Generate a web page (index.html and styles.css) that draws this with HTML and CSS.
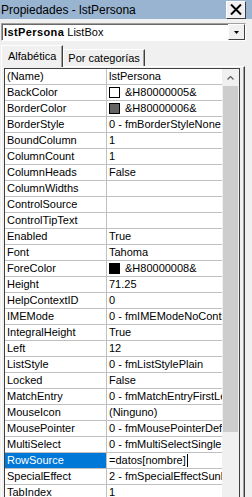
FILE: index.html
```html
<!DOCTYPE html>
<html>

<head>
    <title>Propiedades - lstPersona</title>
    <link rel="stylesheet" href="styles.css">
</head>

<body>
    <div class="titlebar">
        <span class="title">Propiedades - lstPersona</span>
        <span class="close">
            <svg width="12" height="11" viewBox="0 0 12 11"><path d="M1 0.5 L11 10.5 M11 0.5 L1 10.5" stroke="#000" stroke-width="2"/></svg>
        </span>
    </div>

    <div class="objsel">
        <span class="objname"><b>lstPersona</b> ListBox</span>
        <span class="dropbtn">
            <svg width="5" height="3" viewBox="0 0 5 3"><path d="M0 0 H5 L2.5 3 Z" fill="#000"/></svg>
        </span>
    </div>

    <div class="tabs">
        <div class="tab active">Alfabética</div>
        <div class="tab">Por categorías</div>
    </div>

    <div class="page">
        <div class="grid">
            <div class="rows">
                <div class="row"><div class="name">(Name)</div><div class="value">lstPersona</div></div>
                <div class="row"><div class="name">BackColor</div><div class="value"><span class="swatch white"></span>&amp;H80000005&amp;</div></div>
                <div class="row"><div class="name">BorderColor</div><div class="value"><span class="swatch grey"></span>&amp;H80000006&amp;</div></div>
                <div class="row"><div class="name">BorderStyle</div><div class="value">0 - fmBorderStyleNone</div></div>
                <div class="row"><div class="name">BoundColumn</div><div class="value">1</div></div>
                <div class="row"><div class="name">ColumnCount</div><div class="value">1</div></div>
                <div class="row"><div class="name">ColumnHeads</div><div class="value">False</div></div>
                <div class="row"><div class="name">ColumnWidths</div><div class="value"></div></div>
                <div class="row"><div class="name">ControlSource</div><div class="value"></div></div>
                <div class="row"><div class="name">ControlTipText</div><div class="value"></div></div>
                <div class="row"><div class="name">Enabled</div><div class="value">True</div></div>
                <div class="row"><div class="name">Font</div><div class="value">Tahoma</div></div>
                <div class="row"><div class="name">ForeColor</div><div class="value"><span class="swatch black"></span>&amp;H80000008&amp;</div></div>
                <div class="row"><div class="name">Height</div><div class="value">71.25</div></div>
                <div class="row"><div class="name">HelpContextID</div><div class="value">0</div></div>
                <div class="row"><div class="name">IMEMode</div><div class="value">0 - fmIMEModeNoControl</div></div>
                <div class="row"><div class="name">IntegralHeight</div><div class="value">True</div></div>
                <div class="row"><div class="name">Left</div><div class="value">12</div></div>
                <div class="row"><div class="name">ListStyle</div><div class="value">0 - fmListStylePlain</div></div>
                <div class="row"><div class="name">Locked</div><div class="value">False</div></div>
                <div class="row"><div class="name">MatchEntry</div><div class="value">0 - fmMatchEntryFirstLetter</div></div>
                <div class="row"><div class="name">MouseIcon</div><div class="value">(Ninguno)</div></div>
                <div class="row"><div class="name">MousePointer</div><div class="value">0 - fmMousePointerDefault</div></div>
                <div class="row"><div class="name">MultiSelect</div><div class="value">0 - fmMultiSelectSingle</div></div>
                <div class="row sel"><div class="name">RowSource</div><div class="value">=datos[nombre]<span class="caret"></span></div></div>
                <div class="row"><div class="name">SpecialEffect</div><div class="value">2 - fmSpecialEffectSunken</div></div>
                <div class="row"><div class="name">TabIndex</div><div class="value">1</div></div>
            </div>
            <div class="scrollbar">
                <div class="arrow">
                    <svg width="7" height="4" viewBox="0 0 7 4"><path d="M0.5 3.5 L3.5 0.5 L6.5 3.5" stroke="#606060" stroke-width="1.3" fill="none"/></svg>
                </div>
                <div class="thumb"></div>
            </div>
        </div>
    </div>
</body>
</html>
```

FILE: styles.css
```css
body {
    margin: 0;
    width: 252px;
    height: 497px;
    overflow: hidden;
    background: #f0f0f0;
    font-family: "Liberation Sans", Arial, sans-serif;
    font-size: 11px;
    color: #000;
}

.titlebar {
    height: 19px;
    background: #99b4d1;
    display: flex;
    align-items: center;
    padding: 0 6px 0 1px;
}

.title {
    flex: 1;
    font-size: 12px;
}

.close {
    width: 20px;
    height: 18px;
    box-sizing: border-box;
    border: 1px solid;
    border-color: #fff #404040 #404040 #fff;
    background: #f0f0f0;
    display: flex;
    align-items: center;
    justify-content: center;
}

.objsel {
    margin: 4px 6px 0 1px;
    height: 18px;
    box-sizing: border-box;
    border: 1px solid;
    border-color: #a0a0a0 #fff #fff #a0a0a0;
    box-shadow: inset 1px 1px 0 #696969;
    background: #fff;
    display: flex;
    align-items: center;
    padding-left: 2px;
}

.objname {
    flex: 1;
}

.objname b {
    letter-spacing: 0.4px;
}

.dropbtn {
    width: 17px;
    height: 16px;
    box-sizing: border-box;
    border: 1px solid;
    border-color: #fff #404040 #404040 #fff;
    background: #f0f0f0;
    display: flex;
    align-items: center;
    justify-content: center;
}

.tabs {
    display: flex;
    align-items: flex-end;
    height: 21px;
    margin-top: 4px;
    padding-left: 1px;
}

.tab {
    height: 17px;
    box-sizing: border-box;
    padding: 2px 4px 0 4px;
    border: 1px solid;
    border-color: #fff #404040 transparent #fff;
    border-bottom: none;
    box-shadow: inset -1px 0 0 #a0a0a0;
}

.tab.active {
    padding: 4px 6px 0 6px;
    position: relative;
    z-index: 1;
    margin-bottom: -1px;
    height: 22px;
    background: #f0f0f0;
}

.page {
    margin-left: 1px;
    width: 244px;
    height: 440px;
    box-sizing: border-box;
    border: 1px solid;
    border-color: #fff #404040 #404040 #fff;
    box-shadow: inset -1px 0 0 #a0a0a0;
    padding: 1px 4px 0 2px;
}

.grid {
    display: flex;
    border: 1px solid #404040;
    background: #fff;
}

.rows {
    width: 217px;
}

.row {
    display: flex;
    height: 16px;
    box-sizing: border-box;
    border-bottom: 1px solid #c0c0c0;
    line-height: 15px;
    white-space: nowrap;
}

.name {
    width: 102px;
    box-sizing: border-box;
    padding-left: 2px;
    border-right: 1px solid #c0c0c0;
    overflow: hidden;
}

.value {
    flex: 1;
    padding-left: 2px;
    overflow: hidden;
    display: flex;
    align-items: center;
}

.swatch {
    width: 11px;
    height: 11px;
    box-sizing: border-box;
    border: 1px solid #000;
    margin-right: 5px;
    flex: none;
}

.white { background: #fff; }
.grey { background: #646464; }
.black { background: #000; }

.sel .name {
    background: #0078d7;
    color: #fff;
}

.caret {
    width: 1px;
    height: 13px;
    margin-left: 1px;
    background: #000;
}

.scrollbar {
    width: 17px;
    background: #f0f0f0;
}

.arrow {
    height: 17px;
    display: flex;
    align-items: center;
    justify-content: center;
}

.thumb {
    height: 346px;
    margin: 0 1px;
    background: #cdcdcd;
}
```
